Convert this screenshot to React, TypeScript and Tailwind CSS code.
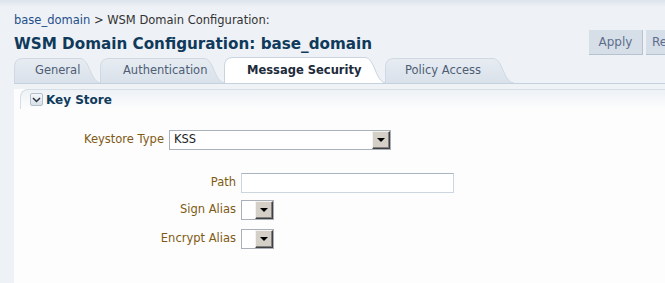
import React from "react";

const font = "font-['DejaVu_Sans',sans-serif]";

function Tab({
  label,
  width,
  selected,
  pl,
}: {
  label: string;
  width: number;
  selected?: boolean;
  pl: number;
}) {
  const h = selected ? 26 : 25;
  const w = width;
  const d = `M0.5,${h} L0.5,9 Q0.5,0.5 9,0.5 L${w - 22},0.5 C${w - 12},0.5 ${w - 12},${h - 1} ${w - 1},${h}`;
  const id = `g-${label.replace(/\s/g, "")}`;
  return (
    <div
      className={`relative shrink-0 -mr-[2px] ${selected ? "z-10 h-[26px]" : "mt-[1px] h-[25px]"}`}
      style={{ width: w }}
    >
      <svg className="absolute inset-0" width={w} height={h}>
        <defs>
          <linearGradient id={id} x1="0" y1="0" x2="0" y2="1">
            {selected ? (
              <>
                <stop offset="0" stopColor="#ffffff" />
                <stop offset="1" stopColor="#ffffff" />
              </>
            ) : (
              <>
                <stop offset="0" stopColor="#e7ecf2" />
                <stop offset="1" stopColor="#d9e1ea" />
              </>
            )}
          </linearGradient>
        </defs>
        <path d={d + ` L0.5,${h} Z`} fill={`url(#${id})`} stroke="none" />
        <path d={d} fill="none" stroke={selected ? "#c9d4e0" : "#d0d9e3"} strokeWidth="1" />
      </svg>
      <div
        className={`relative flex h-full items-center text-[11.5px] ${
          selected ? "font-bold text-[#202a3a]" : "text-[#4e5d74]"
        }`}
        style={{ paddingLeft: pl, paddingTop: selected ? 1 : 0 }}
      >
        {label}
      </div>
    </div>
  );
}

function DropButton() {
  return (
    <div className="flex h-[18px] w-[18px] shrink-0 items-center justify-center border-t border-l border-t-[#f4f2ee] border-l-[#f4f2ee] border-r border-b border-r-[#404040] border-b-[#404040] bg-[#d4d0c8] shadow-[inset_-1px_-1px_0_#808080]">
      <div className="h-0 w-0 border-x-[4px] border-t-[4px] border-x-transparent border-t-black" />
    </div>
  );
}

function Select({ width, value }: { width: number; value?: string }) {
  return (
    <div
      className="flex h-[20px] items-center border border-[#a9b0b9] bg-white"
      style={{ width }}
    >
      <div className="flex-1 pl-[4px] text-[11.5px] text-[#222]">{value}</div>
      <DropButton />
    </div>
  );
}

export default function App() {
  return (
    <div
      className={`relative h-[283px] w-[665px] overflow-hidden bg-[#eef1f5] ${font}`}
    >
      <div className="h-[7px] bg-gradient-to-b from-[#dde4ed] to-[#eef1f5]" />
      <div className="pl-[14px]">
        <div className="mt-[6px] h-[14px] text-[11.5px] leading-[14px] text-[#333]">
          <span className="text-[#1f4f8a]">base_domain</span>
          <span> &gt; WSM Domain Configuration:</span>
        </div>
        <div className="mt-[3px] flex h-[26px] items-start">
          <div className="mt-[5px] text-[15.2px] font-bold leading-[18px] text-[#0f3a5c]">
            WSM Domain Configuration: base_domain
          </div>
          <div className="ml-auto mr-[-35px] flex gap-[3px]">
            <div className="flex h-[25px] w-[54px] items-center justify-center border-r border-b border-[#b6c2d0] bg-[#d6dee8] text-[12px] text-[#5f6e8c]">
              Apply
            </div>
            <div className="flex h-[25px] w-[54px] items-center border-r border-b border-[#b6c2d0] bg-[#d6dee8] pl-[6px] text-[12px] text-[#5f6e8c]">
              Revert
            </div>
          </div>
        </div>
        <div className="mt-[1px] flex h-[26px] items-start">
          <Tab label="General" width={88} pl={21} />
          <Tab label="Authentication" width={126} pl={23} />
          <Tab label="Message Security" width={163} pl={23} selected />
          <Tab label="Policy Access" width={130} pl={20} />
        </div>
        <div className="h-[1px] bg-[#c4d1df]" />
        <div className="h-[5px] bg-[#f0f3f6]" />
        <div className="h-[195px] bg-[#fdfdfd]">
          <div className="ml-[6px] flex h-[20px] items-center rounded-tl-[8px] border-t border-l border-[#d5dde7] bg-gradient-to-b from-[#eef2f6] to-[#fdfdfd] pl-[9px]">
            <div className="flex h-[13px] w-[13px] items-center justify-center rounded-[2px] border border-[#b3bfcd] bg-gradient-to-b from-[#f6f8fa] to-[#d9e0e8]">
              <svg width="9" height="6" viewBox="0 0 9 6">
                <path d="M1 1 L4.5 4.5 L8 1" fill="none" stroke="#2b3340" strokeWidth="1.5" />
              </svg>
            </div>
            <div className="ml-[3px] text-[12px] font-bold text-[#0f3a5c]">Key Store</div>
          </div>
          <div className="mt-[21px] flex items-center">
            <div className="w-[150px] text-right text-[11.5px] text-[#7f5a14]">Keystore Type</div>
            <div className="ml-[5px]">
              <Select width={222} value="KSS" />
            </div>
          </div>
          <div className="mt-[23px] flex items-center">
            <div className="w-[222px] text-right text-[11.5px] text-[#7f5a14]">Path</div>
            <div className="ml-[5px] h-[20px] w-[213px] border border-[#cdd5de] border-t-[#aab5c1] bg-white" />
          </div>
          <div className="mt-[7px] flex items-center">
            <div className="w-[222px] text-right text-[11.5px] text-[#7f5a14]">Sign Alias</div>
            <div className="ml-[5px]">
              <Select width={33} />
            </div>
          </div>
          <div className="mt-[9px] flex items-center">
            <div className="w-[222px] text-right text-[11.5px] text-[#7f5a14]">Encrypt Alias</div>
            <div className="ml-[5px]">
              <Select width={33} />
            </div>
          </div>
        </div>
      </div>
    </div>
  );
}
